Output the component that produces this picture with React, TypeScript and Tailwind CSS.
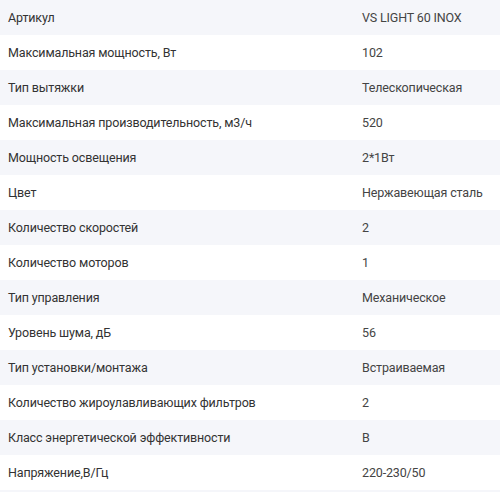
import React from "react";

const rows: [string, string][] = [
  ["Артикул", "VS LIGHT 60 INOX"],
  ["Максимальная мощность, Вт", "102"],
  ["Тип вытяжки", "Телескопическая"],
  ["Максимальная производительность, м3/ч", "520"],
  ["Мощность освещения", "2*1Вт"],
  ["Цвет", "Нержавеющая сталь"],
  ["Количество скоростей", "2"],
  ["Количество моторов", "1"],
  ["Тип управления", "Механическое"],
  ["Уровень шума, дБ", "56"],
  ["Тип установки/монтажа", "Встраиваемая"],
  ["Количество жироулавливающих фильтров", "2"],
  ["Класс энергетической эффективности", "B"],
  ["Напряжение,В/Гц", "220-230/50"],
  ["", ""],
];

export default function App() {
  return (
    <div className="w-[500px] h-[492px] overflow-hidden bg-white" style={{ fontFamily: "Roboto, 'Noto Sans', sans-serif" }}>
      {rows.map(([k, v], i) => (
        <div
          key={i}
          className={`flex h-[35px] items-center pt-[1px] text-[12.5px] leading-[16px] tracking-[-0.15px] ${i % 2 === 0 ? "bg-[#f5f6fa]" : "bg-white"}`}
        >
          <div className="w-[362px] pl-2 text-[#333333]">{k}</div>
          <div className="flex-1 text-[#444444]">{v}</div>
        </div>
      ))}
    </div>
  );
}
